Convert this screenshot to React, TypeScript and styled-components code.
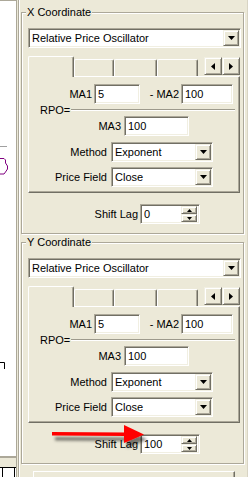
import React from 'react';
import styled, { createGlobalStyle } from 'styled-components';

const GlobalStyle = createGlobalStyle`
  html, body {
    margin: 0;
    padding: 0;
    background: #ece9d8;
  }
  body {
    font-family: "Liberation Sans", Arial, sans-serif;
    font-size: 11px;
    color: #000;
  }
`;

const Screen = styled.div`
  position: relative;
  display: flex;
  width: 248px;
  height: 477px;
  overflow: hidden;
  background: #ece9d8;
`;

/* left: the edge of the chart window */
const ChartStrip = styled.div`
  width: 17px;
  margin-right: 1px;
  display: flex;
  flex-direction: column;
  flex-shrink: 0;
`;

const ChartTop = styled.div`
  height: 4px;
`;

const ChartArea = styled.div`
  height: 455px;
  background: #fff;
  border-top: 1px solid #aca899;
  border-right: 1px solid #aca899;
`;

const ChartFooter = styled.div`
  flex: 1;
  border-top: 2px solid #aca899;
  border-right: 1px solid #aca899;
  padding-top: 9px;
`;

const GridRow = styled.div`
  height: 20px;
  background: #fff;
  border-top: 1px solid #000;
  display: flex;
`;

const GridCell = styled.div<{ $width: number }>`
  width: ${(p) => p.$width}px;
  border-right: 1px solid #000;
  flex-shrink: 0;
`;

/* right: properties panel */
const Panel = styled.div`
  width: 230px;
  box-sizing: border-box;
  border-left: 1px solid #aca899;
  border-right: 1px solid #d8d4c4;
  box-shadow: inset 1px 0 0 #fff;
  padding: 12px 0 0 2px;
  display: flex;
  flex-direction: column;
  gap: 8px;
  overflow: hidden;
`;

const GroupBox = styled.div`
  position: relative;
  width: 223px;
  height: 222px;
  flex-shrink: 0;
  box-sizing: border-box;
  border: 1px solid #aca899;
  box-shadow: inset 1px 1px 0 #fff, 1px 1px 0 #fff;
  padding: 15px 0 0 6px;
`;

const Legend = styled.span`
  position: absolute;
  left: 4px;
  top: -7px;
  padding: 0 1px;
  line-height: 13px;
  background: #ece9d8;
  white-space: nowrap;
`;

const sunken = `
  box-sizing: border-box;
  background: #fff;
  border: 1px solid;
  border-color: #aca899 #fff #fff #aca899;
  box-shadow: inset 1px 1px 0 #716f64, inset -1px -1px 0 #f1efe2;
`;

const raised = `
  box-sizing: border-box;
  background: #ece9d8;
  border: 1px solid;
  border-color: #f1efe2 #716f64 #716f64 #f1efe2;
  box-shadow: inset 1px 1px 0 #fff, inset -1px -1px 0 #aca899;
`;

const Combo = styled.div<{ $width: number }>`
  ${sunken}
  width: ${(p) => p.$width}px;
  height: 20px;
  display: flex;
  align-items: center;
  padding: 0 1px 0 3px;
  flex-shrink: 0;
`;

const FieldText = styled.span`
  flex: 1;
  white-space: nowrap;
  overflow: hidden;
  padding-bottom: 1px;
`;

const SmallButton = styled.span<{ $w: number; $h: number }>`
  ${raised}
  width: ${(p) => p.$w}px;
  height: ${(p) => p.$h}px;
  display: flex;
  align-items: center;
  justify-content: center;
  flex-shrink: 0;
`;

const TextBox = styled.div<{ $width: number }>`
  ${sunken}
  width: ${(p) => p.$width}px;
  height: 20px;
  display: flex;
  align-items: center;
  padding: 0 1px 0 3px;
  flex-shrink: 0;
`;

const SpinStack = styled.span`
  display: flex;
  flex-direction: column;
  margin-right: 1px;
`;

const TabStrip = styled.div`
  position: relative;
  z-index: 1;
  display: flex;
  align-items: flex-end;
  width: 212px;
  height: 20px;
  margin-top: 8px;
`;

const Tab = styled.div<{ $width: number; $active?: boolean }>`
  width: ${(p) => p.$width}px;
  height: ${(p) => (p.$active ? 21 : 17)}px;
  margin-bottom: ${(p) => (p.$active ? -1 : 0)}px;
  box-sizing: border-box;
  flex-shrink: 0;
  background: #ece9d8;
  border-top: 1px solid #fff;
  border-left: 1px solid #fff;
  border-right: 1px solid #716f64;
  box-shadow: inset -1px 0 0 #aca899;
  border-radius: 2px 2px 0 0;
`;

const TabScroll = styled.div`
  display: flex;
  align-self: flex-start;
  margin-top: 1px;
  margin-left: auto;
`;

const TabPanel = styled.div`
  width: 212px;
  height: 117px;
  box-sizing: border-box;
  border: 1px solid;
  border-color: #fff #716f64 #716f64 #fff;
  box-shadow: inset -1px -1px 0 #aca899;
  padding-top: 7px;
  display: flex;
  flex-direction: column;
`;

const Row = styled.div<{ $top?: number }>`
  display: flex;
  align-items: center;
  height: 20px;
  margin-top: ${(p) => p.$top ?? 0}px;
`;

const Label = styled.span<{ $width: number; $gap: number }>`
  width: ${(p) => p.$width}px;
  margin-right: ${(p) => p.$gap}px;
  text-align: right;
  white-space: nowrap;
  flex-shrink: 0;
  padding-bottom: 1px;
`;

const FormulaRow = styled.div`
  display: flex;
  align-items: center;
  height: 12px;
  padding-left: 11px;
`;

const FormulaText = styled.span`
  flex-shrink: 0;
`;

const Rule = styled.div`
  width: 164px;
  height: 1px;
  margin: 0 0 1px 1px;
  flex-shrink: 0;
  background: #9d9a8c;
  border-bottom: 1px solid #fff;
`;

const NextBox = styled.div`
  width: 202px;
  height: 20px;
  margin: -1px 0 0 12px;
  flex-shrink: 0;
  box-sizing: border-box;
  border-top: 1px solid #fff;
  border-left: 1px solid #fff;
  border-right: 1px solid #716f64;
  box-shadow: inset -1px 0 0 #aca899;
`;

const Overlay = styled.svg`
  position: absolute;
  left: 0;
  top: 0;
  pointer-events: none;
`;

type Dir = 'up' | 'down' | 'left' | 'right';

const Arrow = ({ dir, size = 7 }: { dir: Dir; size?: number }) => {
  const h = Math.ceil(size / 2);
  const pts = {
    down: `0,0 ${size},0 ${size / 2},${h}`,
    up: `${size / 2},0 ${size},${h} 0,${h}`,
    right: `0,0 ${h},${size / 2} 0,${size}`,
    left: `${h},0 ${h},${size} 0,${size / 2}`,
  }[dir];
  const vertical = dir === 'up' || dir === 'down';
  return (
    <svg width={vertical ? size : h} height={vertical ? h : size} style={{ display: 'block' }}>
      <polygon points={pts} fill="#000" />
    </svg>
  );
};

const DropDown = ({ width, value }: { width: number; value: string }) => (
  <Combo $width={width}>
    <FieldText>{value}</FieldText>
    <SmallButton $w={16} $h={16}>
      <Arrow dir="down" />
    </SmallButton>
  </Combo>
);

const Spin = ({ width, value }: { width: number; value: string }) => (
  <TextBox $width={width}>
    <FieldText>{value}</FieldText>
    <SpinStack>
      <SmallButton $w={16} $h={8}>
        <Arrow dir="up" size={5} />
      </SmallButton>
      <SmallButton $w={16} $h={8}>
        <Arrow dir="down" size={5} />
      </SmallButton>
    </SpinStack>
  </TextBox>
);

const Coordinate = ({ title, shift }: { title: string; shift: string }) => (
  <GroupBox>
    <Legend>{title}</Legend>
    <DropDown width={213} value="Relative Price Oscillator" />
    <TabStrip>
      <Tab $width={46} $active />
      <Tab $width={40} />
      <Tab $width={43} />
      <Tab $width={41} />
      <TabScroll>
        <SmallButton $w={18} $h={18}>
          <Arrow dir="left" />
        </SmallButton>
        <SmallButton $w={18} $h={18}>
          <Arrow dir="right" />
        </SmallButton>
      </TabScroll>
    </TabStrip>
    <TabPanel>
      <Row>
        <Label $width={63} $gap={2}>MA1</Label>
        <TextBox $width={46}>
          <FieldText>5</FieldText>
        </TextBox>
        <Label $width={39} $gap={2}>- MA2</Label>
        <TextBox $width={52}>
          <FieldText>100</FieldText>
        </TextBox>
      </Row>
      <FormulaRow>
        <FormulaText>RPO=</FormulaText>
        <Rule />
      </FormulaRow>
      <Row>
        <Label $width={92} $gap={3}>MA3</Label>
        <TextBox $width={65}>
          <FieldText>100</FieldText>
        </TextBox>
      </Row>
      <Row $top={6}>
        <Label $width={78} $gap={4}>Method</Label>
        <DropDown width={102} value="Exponent" />
      </Row>
      <Row $top={5}>
        <Label $width={78} $gap={4}>Price Field</Label>
        <DropDown width={102} value="Close" />
      </Row>
    </TabPanel>
    <Row $top={11}>
      <Label $width={110} $gap={2}>Shift Lag</Label>
      <Spin width={60} value={shift} />
    </Row>
  </GroupBox>
);

export default function App() {
  return (
    <>
      <GlobalStyle />
      <Screen>
        <ChartStrip>
          <ChartTop />
          <ChartArea>
            <svg width={16} height={455} style={{ display: 'block' }}>
              <line x1={0} y1={145.5} x2={7} y2={145.5} stroke="#a0a0a0" />
              <polyline
                points="0,157.5 4,157.5 5.5,159 5.5,162 7.5,165 7.5,168 5.5,171 4,173 0,173"
                fill="none"
                stroke="#800080"
              />
              <polyline points="0,361.5 4.5,361.5 4.5,368" fill="none" stroke="#000" />
            </svg>
          </ChartArea>
          <ChartFooter>
            <GridRow>
              <GridCell $width={2} />
              <GridCell $width={11} />
            </GridRow>
          </ChartFooter>
        </ChartStrip>
        <Panel>
          <Coordinate title="X Coordinate" shift="0" />
          <Coordinate title="Y Coordinate" shift="100" />
          <NextBox />
        </Panel>
        <Overlay width={248} height={477}>
          <defs>
            <filter id="shadow" x="-20%" y="-100%" width="140%" height="300%">
              <feDropShadow dx="3" dy="5" stdDeviation="1.6" floodColor="#000" floodOpacity="0.5" />
            </filter>
          </defs>
          <g filter="url(#shadow)">
            <polygon points="52,432 126,432.5 126,436 52,435.5" fill="#f00" />
            <polygon points="124,425 144,434.5 124,443" fill="#f00" />
          </g>
        </Overlay>
      </Screen>
    </>
  );
}
